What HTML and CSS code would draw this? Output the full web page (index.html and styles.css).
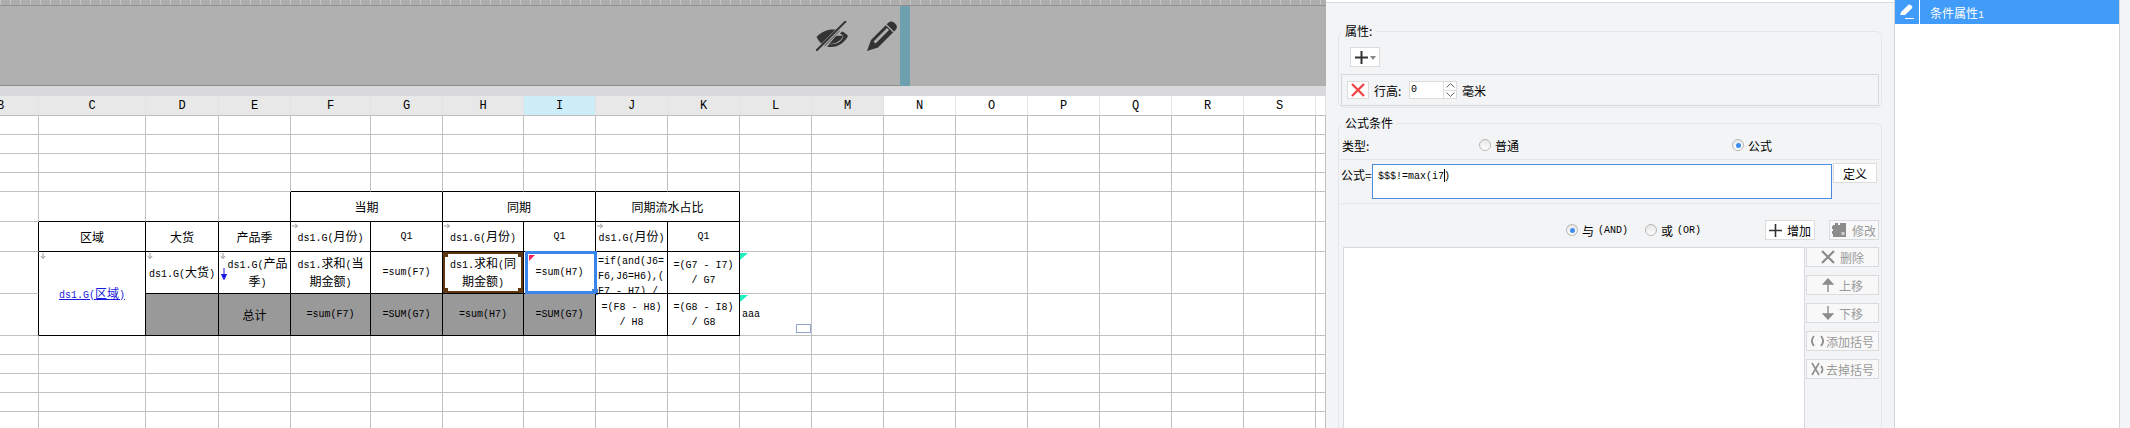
FILE: index.html
```html
<!DOCTYPE html>
<html lang="en">
<head>
    <meta charset="UTF-8">
    <title>条件属性</title>
    <link rel="stylesheet" href="styles.css">
</head>
<body>
    <svg class="defs" width="0" height="0">
        <symbol id="arrow-down" viewBox="0 0 7 7"><path d="M3.5 0v6M1 3.5l2.5 3 2.5-3" fill="none" stroke="#8a8a8a"/></symbol>
        <symbol id="arrow-right" viewBox="0 0 7 7"><path d="M0 3.5h6M3.5 1l3 2.5-3 2.5" fill="none" stroke="#8a8a8a"/></symbol>
    </svg>
    <div class="app">
        <!-- Report designer -->
        <div class="designer">
            <div class="ruler"></div>
            <div class="band">
                <div class="band-tools">
                    <svg class="tool-eye" width="32" height="30" viewBox="0 0 32 30">
                        <path d="M0.5 16C5 11 11 8.5 17 8.5c3 0 5 .5 7 1.2L9 25C5 23 2.5 20 0.5 16z" fill="#333"/>
                        <path d="M26 10.5c2.5 1 4.5 2.5 6 4.5-3 6-9 11-17 11-1.500 0-3-.2-4-.6l2.500-2.400c6 1 12-2 14-7.500-1-1.200-2.200-2.200-3.500-3z" fill="#333"/>
                        <path d="M13 23l7-8c2 0 4-.5 7 0-1.500 4.500-7.500 8-14 8z" fill="#333"/>
                        <path d="M1 29.500L30 .5" stroke="#b0b0b0" stroke-width="3.600"/>
                        <path d="M0 30L30 0" stroke="#333" stroke-width="2"/>
                    </svg>
                    <svg class="tool-pencil" width="30" height="30" viewBox="0 0 30 30">
                        <path fill-rule="evenodd" fill="#333" d="M0 30L4 19 21 2Q24-.5 27 1.500L29 3.500Q31 6.500 28.500 9L11 26.500zM6.500 20.500L8.500 22.500 22 9 20 7z"/>
                        <path d="M19 3.500L26.500 11" stroke="#b0b0b0" stroke-width="1.200"/>
                    </svg>
                </div>
                <div class="band-stripe"></div>
                <div class="band-rest"></div>
            </div>
            <div class="gap-bar"></div>
            <table class="sheet">
                <colgroup>
                    <col class="w38"><col class="w107"><col class="w73"><col class="w72"><col class="w80"><col class="w72"><col class="w81"><col class="w72"><col class="w72"><col class="w72"><col class="w72"><col class="w72"><col class="w72"><col class="w72"><col class="w72"><col class="w72"><col class="w72"><col class="w72"><col class="w10">
                </colgroup>
                <tr class="h20">
                    <th class="used cut">B</th><th class="used">C</th><th class="used">D</th><th class="used">E</th><th class="used">F</th><th class="used">G</th><th class="used">H</th><th class="active">I</th><th class="used">J</th><th class="used">K</th><th class="used">L</th><th class="used">M</th><th>N</th><th>O</th><th>P</th><th>Q</th><th>R</th><th>S</th><th></th>
                </tr>
                <tr class="h19"><td></td><td></td><td></td><td></td><td></td><td></td><td></td><td></td><td></td><td></td><td></td><td></td><td></td><td></td><td></td><td></td><td></td><td></td><td></td></tr>
                <tr class="h19"><td></td><td></td><td></td><td></td><td></td><td></td><td></td><td></td><td></td><td></td><td></td><td></td><td></td><td></td><td></td><td></td><td></td><td></td><td></td></tr>
                <tr class="h19"><td></td><td></td><td></td><td></td><td></td><td></td><td></td><td></td><td></td><td></td><td></td><td></td><td></td><td></td><td></td><td></td><td></td><td></td><td></td></tr>
                <tr class="h19"><td></td><td></td><td></td><td></td><td class="kb"></td><td class="kb"></td><td class="kb"></td><td class="kb"></td><td class="kb"></td><td class="kb"></td><td></td><td></td><td></td><td></td><td></td><td></td><td></td><td></td><td></td></tr>
                <tr class="h30">
                    <td></td><td class="kb"></td><td class="kb"></td><td class="k"></td>
                    <td class="k" colspan="2">当期</td><td class="k" colspan="2">同期</td><td class="k" colspan="2">同期流水占比</td>
                    <td></td><td></td><td></td><td></td><td></td><td></td><td></td><td></td><td></td>
                </tr>
                <tr class="h30">
                    <td class="kr"></td><td class="k">区域</td><td class="k">大货</td><td class="k">产品季</td>
                    <td class="k"><svg class="mark"><use href="#arrow-right"/></svg><span class="m">ds1.G(</span>月份<span class="m">)</span></td>
                    <td class="k m">Q1</td>
                    <td class="k"><svg class="mark"><use href="#arrow-right"/></svg><span class="m">ds1.G(</span>月份<span class="m">)</span></td>
                    <td class="k m">Q1</td>
                    <td class="k"><svg class="mark"><use href="#arrow-right"/></svg><span class="m">ds1.G(</span>月份<span class="m">)</span></td>
                    <td class="k m">Q1</td>
                    <td></td><td></td><td></td><td></td><td></td><td></td><td></td><td></td><td></td>
                </tr>
                <tr class="h42">
                    <td class="kr"></td>
                    <td class="k link" rowspan="2"><svg class="mark"><use href="#arrow-down"/></svg><span class="m">ds1.G(</span>区域<span class="m">)</span></td>
                    <td class="k"><svg class="mark"><use href="#arrow-down"/></svg><span class="m">ds1.G(</span>大货<span class="m">)</span></td>
                    <td class="k season">
                        <svg class="mark"><use href="#arrow-down"/></svg>
                        <svg class="sort" width="6" height="12" viewBox="0 0 6 12"><path d="M3 0v11M.5 6.500L3 11.500 5.500 6.500z" fill="#1a1ae0" stroke="#1a1ae0"/></svg>
                        <span class="m">ds1.G(</span>产品季<span class="m">)</span>
                    </td>
                    <td class="k pad"><span class="m">ds1.</span>求和<span class="m">(</span>当期金额<span class="m">)</span></td>
                    <td class="k m">=sum(F7)</td>
                    <td class="k pad"><span class="m">ds1.</span>求和<span class="m">(</span>同期金额<span class="m">)</span>
                        <div class="frame"><i></i><i></i><i></i><i></i></div>
                    </td>
                    <td class="k m">=sum(H7)<div class="selected"><i class="handle"></i><i class="flag-red"></i></div></td>
                    <td class="k m"><div class="clip">=if(and(J6=<br>F6,J6=H6),(<br>F7 - H7) /<br>F7</div></td>
                    <td class="k m">=(G7 - I7)<br>/ G7</td>
                    <td><i class="flag-green"></i></td>
                    <td></td><td></td><td></td><td></td><td></td><td></td><td></td><td></td>
                </tr>
                <tr class="h42">
                    <td class="kr"></td>
                    <td class="k gray"></td><td class="k gray">总计</td>
                    <td class="k gray m">=sum(F7)</td><td class="k gray m">=SUM(G7)</td>
                    <td class="k gray m">=sum(H7)</td><td class="k gray m">=SUM(G7)</td>
                    <td class="k m">=(F8 - H8)<br>/ H8</td>
                    <td class="k m">=(G8 - I8)<br>/ G8</td>
                    <td class="m note"><i class="flag-green"></i>aaa<i class="resize-box"></i></td>
                    <td></td><td></td><td></td><td></td><td></td><td></td><td></td><td></td>
                </tr>
                <tr class="h19"><td></td><td></td><td></td><td></td><td></td><td></td><td></td><td></td><td></td><td></td><td></td><td></td><td></td><td></td><td></td><td></td><td></td><td></td><td></td></tr>
                <tr class="h19"><td></td><td></td><td></td><td></td><td></td><td></td><td></td><td></td><td></td><td></td><td></td><td></td><td></td><td></td><td></td><td></td><td></td><td></td><td></td></tr>
                <tr class="h19"><td></td><td></td><td></td><td></td><td></td><td></td><td></td><td></td><td></td><td></td><td></td><td></td><td></td><td></td><td></td><td></td><td></td><td></td><td></td></tr>
                <tr class="h19"><td></td><td></td><td></td><td></td><td></td><td></td><td></td><td></td><td></td><td></td><td></td><td></td><td></td><td></td><td></td><td></td><td></td><td></td><td></td></tr>
                <tr class="h19"><td></td><td></td><td></td><td></td><td></td><td></td><td></td><td></td><td></td><td></td><td></td><td></td><td></td><td></td><td></td><td></td><td></td><td></td><td></td></tr>
            </table>
        </div>

        <!-- Condition editor -->
        <div class="panel">
            <div class="panel-body">
                <fieldset class="group">
                    <legend>属性:</legend>
                    <div class="add-btn">
                        <svg width="15" height="15" viewBox="0 0 15 15"><path d="M7.500 1v13M1 7.500h13" stroke="#333" stroke-width="2"/></svg>
                        <span class="caret"></span>
                    </div>
                    <div class="attr-row">
                        <div class="remove-btn">
                            <svg width="14" height="14" viewBox="0 0 14 14"><path d="M1 1l12 12M13 1L1 13" stroke="#f04646" stroke-width="2.400"/></svg>
                        </div>
                        <span class="attr-label">行高:</span>
                        <div class="spin">
                            <div class="spin-value m">0</div>
                            <div class="spin-btns">
                                <span><svg width="9" height="5" viewBox="0 0 9 5"><path d="M.5 4.500l4-4 4 4" fill="none" stroke="#666"/></svg></span>
                                <span><svg width="9" height="5" viewBox="0 0 9 5"><path d="M.5.500l4 4 4-4" fill="none" stroke="#666"/></svg></span>
                            </div>
                        </div>
                        <span class="attr-unit">毫米</span>
                    </div>
                </fieldset>

                <fieldset class="group group-formula">
                    <legend>公式条件</legend>
                    <div class="type-row">
                        <span>类型:</span>
                        <label class="radio-item"><i class="radio"></i>普通</label>
                        <label class="radio-item"><i class="radio on"></i>公式</label>
                    </div>
                    <div class="formula-row">
                        <span class="formula-label">公式=</span>
                        <div class="formula-input m">$$$!=max(i7<span class="cursor"></span>)</div>
                        <div class="btn define">定义</div>
                    </div>
                    <div class="logic-row">
                        <div class="logic">
                            <label class="radio-item"><i class="radio on"></i>与<span class="m">(AND)</span></label>
                            <label class="radio-item"><i class="radio"></i>或<span class="m">(OR)</span></label>
                        </div>
                        <div class="btn add">
                            <svg width="13" height="13" viewBox="0 0 13 13"><path d="M6.500 0v13M0 6.500h13" stroke="#333" stroke-width="1.600"/></svg>增加
                        </div>
                        <div class="btn off">
                            <svg width="15" height="14" viewBox="0 0 15 14"><path d="M1 2h2V0h3v2h2V0h6v14H1v-3H0V8h1V6H0V3h1z" fill="#8c8c8c"/><rect x="9.500" y="9" width="3" height="3" fill="#d0d0d0"/></svg>修改
                        </div>
                    </div>
                    <div class="list-row">
                        <div class="cond-list"></div>
                        <div class="cond-btns">
                            <div class="btn off">
                                <svg width="14" height="14" viewBox="0 0 14 14"><path d="M1 1l12 12M13 1L1 13" stroke="#8c8c8c" stroke-width="2.200"/></svg>删除
                            </div>
                            <div class="btn off">
                                <svg width="12" height="14" viewBox="0 0 12 14"><path d="M6 14V3M1.500 6L6 1l4.500 5z" fill="#8c8c8c" stroke="#8c8c8c" stroke-width="1.400"/></svg>上移
                            </div>
                            <div class="btn off">
                                <svg width="12" height="14" viewBox="0 0 12 14"><path d="M6 0v11M1.500 8L6 13l4.500-5z" fill="#8c8c8c" stroke="#8c8c8c" stroke-width="1.400"/></svg>下移
                            </div>
                            <div class="btn off tight">
                                <svg width="13" height="12" viewBox="0 0 13 12"><path d="M3 1C.5 4 .5 8 3 11M10 1c2.500 3 2.500 7 0 10" fill="none" stroke="#8c8c8c" stroke-width="1.800"/></svg>添加括号
                            </div>
                            <div class="btn off tight">
                                <svg width="13" height="14" viewBox="0 0 13 14"><path d="M1 1l7 12M8 1L1 13" stroke="#8c8c8c" stroke-width="1.500"/><path d="M10 4c2 2 2 5 0 7" fill="none" stroke="#8c8c8c" stroke-width="1.800"/></svg>去掉括号
                            </div>
                        </div>
                    </div>
                </fieldset>
            </div>
        </div>

        <!-- Condition list -->
        <div class="side">
            <div class="side-row">
                <div class="side-icon">
                    <svg width="14" height="15" viewBox="0 0 14 15"><path d="M0 11L1.500 7.500 8.500 .8Q9.500 0 10.500 .8L12 2.300Q12.800 3.300 12 4.300L5 11zM5 14h9v1H5z" fill="#fff"/></svg>
                </div>
                <span class="side-text">条件属性<span class="m">1</span></span>
            </div>
        </div>
        <div class="edge"></div>
    </div>
</body>
</html>
```

FILE: styles.css
```css
* {
    margin: 0;
    padding: 0;
    box-sizing: border-box;
}

body {
    font-family: "Noto Sans CJK SC", sans-serif;
    font-size: 12px;
    color: #000;
    background: #fff;
    overflow: hidden;
}

.defs {
    display: block;
    height: 0;
}

/* Latin text is narrow next to the 12px CJK */
.m {
    font-family: "Liberation Mono", monospace;
    font-size: 10px;
}

.app {
    display: flex;
    height: 428px;
    overflow: hidden;
}

/* Designer */
.designer {
    width: 1326px;
    flex: none;
    overflow: hidden;
}

.ruler {
    height: 6px;
    background-color: #aeaeae;
    background-image: repeating-linear-gradient(90deg, #c4c4c4 0, #c4c4c4 1px, transparent 1px, transparent 10px);
    border-bottom: 1px solid #909090;
}

.band {
    display: flex;
    height: 80px;
    background: #b0b0b0;
}

.band-tools {
    width: 900px;
    display: flex;
    justify-content: flex-end;
    gap: 19px;
    padding: 15px 3px 0 0;
    border-bottom: 1px solid #8c8c8c;
}

.band-stripe {
    width: 10px;
    background: #6fa0b0;
}

.band-rest {
    flex: 1;
}

.gap-bar {
    height: 10px;
    background: #d9d9dc;
}

/* Sheet */
.sheet {
    width: 1326px;
    table-layout: fixed;
    border-collapse: separate;
    border-spacing: 0;
    background: #fff;
}

.w38 { width: 39px; }
.w107 { width: 107px; }
.w73 { width: 73px; }
.w72 { width: 72px; }
.w80 { width: 80px; }
.w81 { width: 81px; }
.w10 { width: 10px; }

.h20 { height: 20px; }
.h19 { height: 19px; }
.h30 { height: 30px; }
.h42 { height: 42px; }

.sheet th {
    font-family: "Liberation Mono", monospace;
    font-size: 12px;
    font-weight: normal;
    border-right: 1px solid #e2e2e2;
    border-bottom: 1px solid #bcbcbc;
}

.sheet th.used {
    background: #e8e8e8;
}

.sheet th.active {
    background: #cdeef9;
}

.sheet th.cut {
    text-align: left;
    text-indent: -3px;
}

.sheet td {
    position: relative;
    padding: 0 2px;
    text-align: center;
    vertical-align: middle;
    line-height: 15px;
    border-right: 1px solid #c0c0c0;
    border-bottom: 1px solid #c0c0c0;
}

.sheet td.k {
    border-right-color: #000;
    border-bottom-color: #000;
}

.sheet td.kb {
    border-bottom-color: #000;
}

.sheet td.kr {
    border-right-color: #000;
}

.sheet td.gray {
    background: #999;
}

.sheet td.pad {
    padding: 0 5px;
}

.sheet td.season {
    padding-left: 8px;
}

.link {
    color: #1a1ae0;
    text-decoration: underline;
}

.clip {
    height: 41px;
    overflow: hidden;
    padding-top: 2px;
    white-space: nowrap;
    text-align: left;
}

.mark {
    position: absolute;
    top: 1px;
    left: 1px;
    width: 6px;
    height: 6px;
}

.sort {
    position: absolute;
    left: 2px;
    top: 16px;
}

.note {
    text-align: left !important;
}

/* Overlays on the sheet */
.frame {
    position: absolute;
    inset: 0;
    border: 2px solid #5e3812;
}

.frame i {
    position: absolute;
    width: 5px;
    height: 5px;
    background: #5e3812;
}

.frame i:nth-child(1) { top: -2px; left: -2px; }
.frame i:nth-child(2) { top: -2px; right: -2px; }
.frame i:nth-child(3) { bottom: -2px; left: -2px; }
.frame i:nth-child(4) { bottom: -2px; right: -2px; }

.selected {
    position: absolute;
    inset: -1px -2px -1px 1px;
    border: 3px solid #3b86ea;
}

.handle {
    position: absolute;
    right: -4px;
    bottom: -4px;
    width: 6px;
    height: 6px;
    background: #3b86ea;
}

.flag-red,
.flag-green {
    position: absolute;
    top: 1px;
    left: 1px;
    width: 6px;
    height: 6px;
    clip-path: polygon(0 0, 100% 0, 0 100%);
}

.flag-red {
    background: #f0245a;
}

.flag-green {
    left: 0;
    width: 8px;
    height: 7px;
    background: #1fefc0;
}

.resize-box {
    position: absolute;
    right: 0;
    bottom: 2px;
    width: 15px;
    height: 9px;
    border: 1px solid #8fa6cf;
}

/* Editor panel */
.panel {
    width: 568px;
    flex: none;
    padding-top: 2px;
    background: #fff;
}

.panel-body {
    height: 426px;
    padding: 20px 12px 0;
    background: #f3f4f6;
    border-top: 1px solid #d9dadd;
    overflow: hidden;
}

.group {
    border: 1px solid #e5e6ea;
    border-radius: 6px;
    padding: 0 1px 1px;
}

.group legend {
    margin-left: 1px;
    padding: 0 4px;
    line-height: 16px;
}

.group-formula {
    margin-top: 7px;
    height: 340px;
}

.add-btn {
    display: flex;
    align-items: center;
    gap: 1px;
    width: 30px;
    height: 20px;
    margin: 8px 0 0 10px;
    padding-left: 3px;
    background: #fff;
    border: 1px solid #dcdcdc;
}

.caret {
    width: 0;
    height: 0;
    margin-top: 2px;
    border-left: 3px solid transparent;
    border-right: 3px solid transparent;
    border-top: 4px solid #888;
}

.attr-row {
    display: flex;
    align-items: center;
    height: 32px;
    margin: 7px 1px 0;
    padding-left: 5px;
    border: 1px solid #d8d8d8;
}

.remove-btn {
    display: flex;
    align-items: center;
    justify-content: center;
    width: 22px;
    height: 18px;
    background: #fff;
    border: 1px solid #dcdcdc;
}

.attr-label {
    margin-left: 5px;
    width: 35px;
}

.spin {
    display: flex;
    width: 48px;
    height: 18px;
    background: #fff;
    border: 1px solid #dcdcdc;
}

.spin-value {
    flex: 1;
    line-height: 16px;
    padding-left: 1px;
}

.spin-btns {
    display: flex;
    flex-direction: column;
    width: 13px;
    border-left: 1px solid #dcdcdc;
}

.spin-btns span {
    flex: 1;
    display: flex;
    align-items: center;
    justify-content: center;
}

.spin-btns span + span {
    border-top: 1px solid #dcdcdc;
}

.attr-unit {
    margin-left: 5px;
}

.type-row {
    display: grid;
    grid-template-columns: 137px 253px 1fr;
    align-items: center;
    height: 29px;
    margin: 0 1px;
    padding-left: 1px;
    border-bottom: 1px solid #e3e4e8;
}

.radio-item {
    display: inline-flex;
    align-items: center;
    gap: 4px;
}

.radio {
    position: relative;
    display: block;
    width: 12px;
    height: 12px;
    border: 1px solid #b8b8b8;
    border-radius: 50%;
    background: linear-gradient(#e6e6e6, #fff);
}

.radio.on::after {
    content: "";
    position: absolute;
    top: 2.500px;
    left: 2.500px;
    width: 5px;
    height: 5px;
    border-radius: 50%;
    background: #3f8cf0;
}

.formula-row {
    display: flex;
    align-items: flex-start;
    height: 44px;
    margin: 0 1px;
    padding-top: 3px;
    border-bottom: 1px solid #e3e4e8;
}

.formula-label {
    width: 31px;
    line-height: 16px;
    margin-top: 4px;
}

.formula-input {
    width: 460px;
    height: 35px;
    margin-top: 1px;
    padding: 4px 5px;
    line-height: 15px;
    background: #fff;
    border: 1px solid #4a8ae0;
}

.cursor {
    display: inline-block;
    width: 1px;
    height: 13px;
    margin-right: -1px;
    vertical-align: -3px;
    background: #000;
}

.btn {
    display: flex;
    align-items: center;
    justify-content: center;
    gap: 5px;
    height: 20px;
    background: #fff;
    border: 1px solid #dcdcdc;
}

.define {
    width: 44px;
    margin-left: 1px;
}

.logic-row {
    display: flex;
    align-items: center;
    gap: 14px;
    margin: 16px 1px 0;
}

.logic-row .btn {
    width: 50px;
}

.logic {
    flex: 1;
    display: flex;
    gap: 17px;
    padding-left: 225px;
}

.logic .radio-item {
    width: 62px;
}

.off {
    color: #9a9a9a;
    background: #f8f8f9;
    border-color: #dadbde;
}

.list-row {
    display: flex;
    margin: 7px 1px 0 3px;
}

.cond-list {
    width: 462px;
    height: 200px;
    background: #fff;
    border: 1px solid #d8d8de;
}

.cond-btns {
    display: flex;
    flex-direction: column;
    gap: 8px;
    width: 74px;
    padding-left: 1px;
}

.tight {
    gap: 2px;
}

/* Condition list */
.side {
    width: 226px;
    flex: none;
    background: #fff;
    border-left: 1px solid #d5d5d8;
    border-right: 1px solid #d5d5d8;
}

.side-row {
    display: flex;
    align-items: center;
    height: 24px;
    background: #409bf9;
    color: #fff;
}

.side-icon {
    display: flex;
    align-items: center;
    justify-content: center;
    width: 25px;
    height: 24px;
    padding-bottom: 1px;
    border-right: 1px solid #fff;
}

.side-text {
    margin-left: 10px;
}

.edge {
    flex: 1;
    background: #f3f4f6;
}
```
